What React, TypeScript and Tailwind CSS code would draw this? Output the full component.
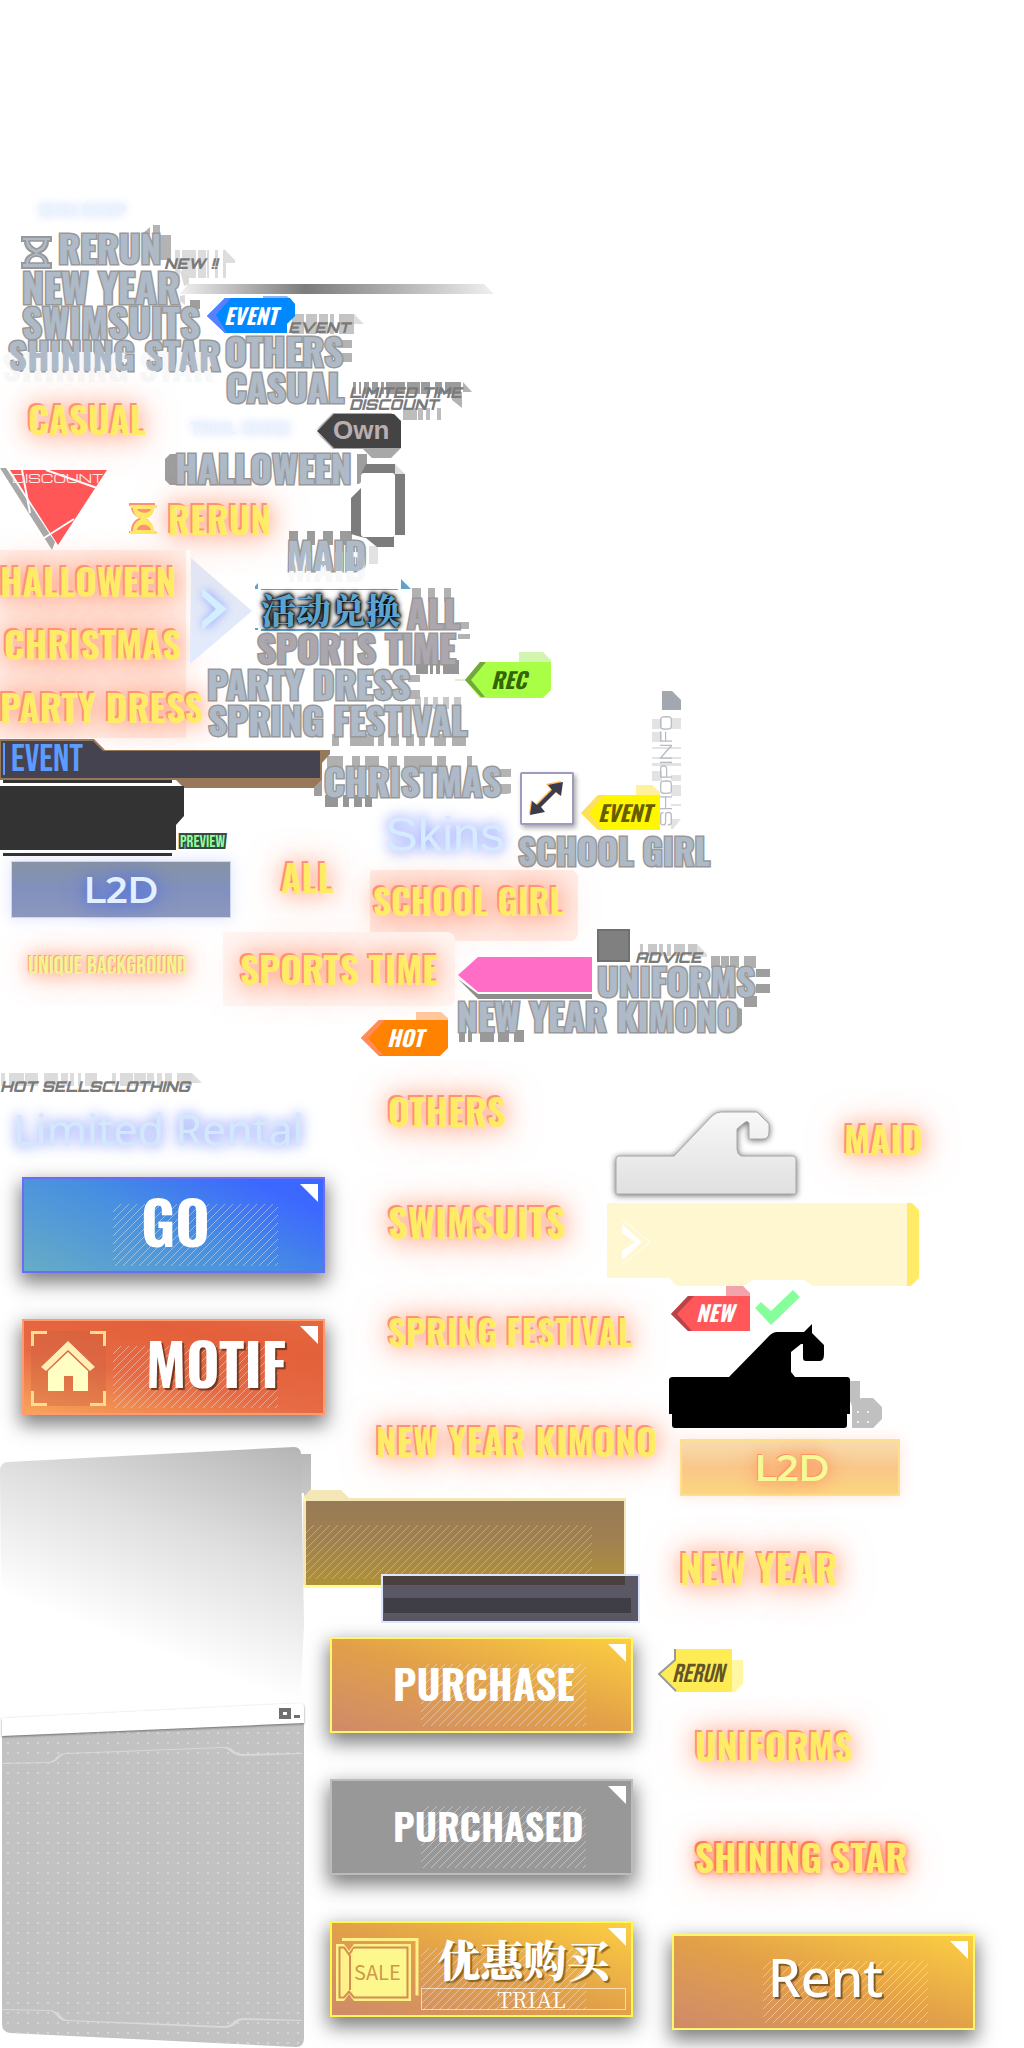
import React, { ReactNode, useId } from 'react';

type Box = { className?: string; children?: ReactNode };

const idleSize = { s: 'text-[35px]', m: 'text-[37px]', l: 'text-[39px]' };
const idleTone = { slate: 'text-[#aebac7]', mauve: 'text-[#aca6ae]' };
const litTone = {
  warm: '[text-shadow:-2px_-2px_0_#ff917c,0_0_20px_rgba(255,120,75,0.65),0_2px_36px_rgba(255,130,80,0.55)]',
  hot: '[text-shadow:-2px_-2px_0_#ff7a5c,0_0_5px_#ff7450,0_0_18px_rgba(255,110,70,0.75),0_4px_34px_rgba(255,130,80,0.5)]',
};

/* Unselected category label: slate letters with a grey outline. */
function Idle({ className = '', size = 'm', tone = 'slate', children }: Box & { size?: keyof typeof idleSize; tone?: keyof typeof idleTone }) {
  return (
    <span
      className={`block h-9 shrink-0 whitespace-nowrap leading-9 font-bold font-[Oswald,'Roboto_Condensed',sans-serif] [-webkit-text-stroke:3px_#989898] [paint-order:stroke_fill] ${idleSize[size]} ${idleTone[tone]} ${className}`}
    >
      {children}
    </span>
  );
}

/* Selected category label: yellow letters over a warm glow. */
function Lit({ className = '', size = 'm', tone = 'warm', children }: Box & { size?: keyof typeof idleSize; tone?: keyof typeof litTone }) {
  return (
    <span
      className={`block h-9 shrink-0 whitespace-nowrap pt-0.5 leading-9 text-[#ffec66] font-bold font-[Oswald,'Roboto_Condensed',sans-serif] ${idleSize[size]} ${litTone[tone]} ${className}`}
    >
      {children}
    </span>
  );
}

function Tech({ className = '', children }: Box) {
  return (
    <span className={`block shrink-0 whitespace-nowrap italic text-[15px] font-black text-[#7a7a7a] font-[Orbitron,'DejaVu_Sans',sans-serif] ${className}`}>
      {children}
    </span>
  );
}

function Faint({ className = '', children }: Box) {
  return (
    <span
      className={`block shrink-0 text-[16px] leading-4 font-bold text-[#e9f5fc] font-['Liberation_Sans',Arial,sans-serif] [text-shadow:0_0_10px_#d5dbff,0_0_16px_#e5e9ff] ${className}`}
    >
      {children}
    </span>
  );
}

function Art({ className = '', box, children }: Box & { box: string }) {
  return (
    <svg aria-hidden="true" viewBox={box} className={`block shrink-0 overflow-visible ${className}`}>
      {children}
    </svg>
  );
}

/* Arrow-shaped ribbon: the drawing fills the box, the word sits on it. */
function Ribbon({ className, box, art, children }: Box & { box: string; art: ReactNode }) {
  return (
    <div className={`relative shrink-0 whitespace-nowrap italic font-bold font-[Oswald,'Roboto_Condensed',sans-serif] ${className}`}>
      <svg aria-hidden="true" viewBox={box} className="absolute inset-0 size-full overflow-visible">
        {art}
      </svg>
      <span className="relative">{children}</span>
    </div>
  );
}

function Hatch({ className, color = '#ffffff', opacity = 0.4 }: { className: string; color?: string; opacity?: number }) {
  const id = useId();
  return (
    <svg aria-hidden="true" className={`absolute ${className}`}>
      <defs>
        <pattern id={id} width="8" height="8" patternUnits="userSpaceOnUse">
          <path d="M-1 9 9 -1M-1 1 1 -1M7 9 9 7" stroke={color} strokeOpacity={opacity} strokeWidth="1" />
        </pattern>
      </defs>
      <rect width="100%" height="100%" fill={`url(#${id})`} />
    </svg>
  );
}

function ShopButton({ className, label, children }: Box & { label: string }) {
  return (
    <button
      type="button"
      aria-label={label}
      className={`relative flex h-24 w-[303px] shrink-0 items-start border-2 text-white shadow-[0_8px_18px_2px_rgba(0,0,0,0.5)] ${className}`}
    >
      <Hatch className="left-[89px] top-[25px] h-[62px] w-[165px]" />
      <svg aria-hidden="true" viewBox="0 0 18 18" className="absolute right-[5px] top-[5px] size-[18px]">
        <path d="M0 0h18v18z" fill="#fff" />
      </svg>
      {children}
    </button>
  );
}

const smears: { y: number; h: number; fill: string; at: number[][] }[] = [
  { y: 250, h: 28, fill: '#dcdcdc', at: [[175, 5], [182, 14], [198, 8], [207, 2], [215, 3], [223, 3]] },
  { y: 314, h: 20, fill: '#c4c4c4', at: [[292, 12], [306, 11], [319, 9], [330, 4], [339, 15]] },
  { y: 382, h: 12, fill: '#9b9b9b', at: [[353, 3], [359, 2], [364, 5], [372, 6], [381, 3], [386, 19], [407, 13], [421, 9], [435, 7], [445, 16]] },
  { y: 408, h: 12, fill: '#bdbdbd', at: [[403, 14], [418, 5], [426, 4], [437, 4]] },
  { y: 531, h: 14, fill: '#9c9c9c', at: [[289, 9], [307, 8], [323, 10], [340, 12]] },
  { y: 588, h: 14, fill: '#b1b1b1', at: [[412, 9], [428, 7], [444, 7]] },
  { y: 660, h: 14, fill: '#969696', at: [[416, 12], [430, 3], [436, 4], [443, 16]] },
  { y: 697, h: 12, fill: '#c9c9c9', at: [[415, 6], [424, 4], [433, 5], [443, 6], [454, 7]] },
  { y: 734, h: 12, fill: '#b0b0b0', at: [[332, 7], [350, 24], [378, 6], [391, 8], [406, 8], [419, 6], [434, 12], [452, 14]] },
  { y: 756, h: 14, fill: '#b0b0b0', at: [[327, 16], [352, 8], [365, 14], [388, 9], [404, 28], [437, 9], [467, 5]] },
  { y: 795, h: 12, fill: '#969696', at: [[325, 13], [343, 6], [354, 8], [365, 7]] },
  { y: 944, h: 12, fill: '#c8c8c8', at: [[640, 3], [648, 9], [659, 4], [667, 4], [674, 11], [688, 9]] },
  { y: 956, h: 12, fill: '#b0b0b0', at: [[711, 9], [721, 8], [730, 9], [744, 12]] },
  { y: 1030, h: 12, fill: '#999', at: [[459, 6], [468, 4], [480, 14], [498, 11], [514, 10]] },
  { y: 1073, h: 13, fill: '#dcdcdc', at: [[1, 4], [9, 15], [25, 13], [44, 14], [61, 7], [70, 4], [78, 3], [85, 12], [112, 4], [120, 13], [134, 12], [147, 7], [157, 5], [165, 7], [177, 15]] },
];

/* Pixel smears that trail off the packed labels. */
function Smears() {
  return (
    <svg aria-hidden="true" viewBox="0 0 780 1090" className="absolute left-0 top-0 -z-10 h-[1090px] w-[780px]">
      {smears.map((row) => row.at.map(([x, w]) => <rect key={`${row.y}-${x}`} x={x} y={row.y} width={w} height={row.h} fill={row.fill} />))}
      <path d="M225 250l10 10v3h-10zM354 314l10 10h-10zM697 944l10 10v3h-10zM192 1073l10 10h-10z" fill="#dedede" />
      <path d="M142 234l8-7v8zM153 225h7v10h11v25h-18zM338 340h14v8h-14zM338 353h14v9h-14zM463 382l9 10h-9zM452 392h10v16l-10-8zM455 622h14v7h-14zM458 634h12v5h-12zM408 675h12v7h-12zM408 690h12v9h-12zM499 769h12v8h-12zM499 784h12v9l-4 1h-8zM499 744" fill="#b3b3b3" />
      <path d="M180 270l9 7v7l-5 2zM180 296l5-1v10l-5-4z" fill="#dadada" />
      <path d="M190 300h10v9h-10zM165 459l5-5h6v31h-6l-5-5zM357 454h10v22l-8 8h-2zM314 788l8-8v16h-8zM756 969h14v8h-14zM756 984h14v9h-14zM744 996h13v11h-13zM730 1004l12 5v16l-5 5h-7z" fill="#9e9e9e" />
      <path d="M369 546h9v18h-9z" fill="#e2e2e2" />
    </svg>
  );
}

function LabelRows() {
  return (
    <>
      <div className="flex h-8 pt-[5px] pl-[38px]">
        <Faint>SKIN SHOP</Faint>
      </div>
      <div className="flex h-[38px] items-start pl-[20px]">
        <Art className="mt-[5px] h-[34px] w-[32px]" box="20 235 32 34">
          <path d="M22 237h29v4h-3c0 8-5 10-9 12 4 2 9 4 9 10h3v5H22v-5h3c0-6 5-8 9-10-4-2-9-4-9-12h-3z" fill="#aebac7" stroke="#989898" strokeWidth="2" />
          <path d="M29 241h15c-1 5-4 7-7.500 8-3.500-1-6.500-3-7.500-8zM29 263c1-5 4-7 7.500-7s6.500 2 7.500 7z" fill="#fff" stroke="#989898" strokeWidth="1.500" />
        </Art>
        <Idle className="ml-[6px] w-[106px]">RERUN</Idle>
        <Tech className="mt-[26px] leading-4">NEW !!</Tech>
      </div>
      <div className="flex h-[35px] items-start pl-[22px]">
        <Idle size="l" className="w-[158px]">NEW YEAR</Idle>
        <div className="mt-4 h-[10px] w-[314px] bg-linear-to-r from-[#f0f0f0] via-[#7c7c7c] via-40% to-[#f0f0f0] [clip-path:polygon(8px_0,304px_0,100%_100%,0_100%)]" />
      </div>
      <div className="flex h-[34px] items-start pl-[22px]">
        <Idle size="l" className="w-[185px]">SWIMSUITS</Idle>
        <Ribbon
          className="-mt-[7px] h-[38px] w-[81px] pl-[17px] pt-[7px] text-[22px] leading-6 text-white"
          box="207 296 81 38"
          art={
            <>
              <path d="M263 296h24l3 3h-27z" fill="#8fb4f5" />
              <path d="M207 316l18-18h65l5 6v12l-8 8v9h-62z" fill="#0088ff" />
              <path d="M207 316l18-18h6l-15 17 11 18h-2z" fill="#5580ff" />
            </>
          }
        >
          EVENT
        </Ribbon>
        <Tech className="mt-[17px] leading-4">EVENT</Tech>
      </div>
      <div className="flex h-8 items-start pl-2">
        <Idle className="w-[217px] [text-shadow:-6px_11px_0_#f7f8f9]">SHINING STAR</Idle>
        <Idle className="-mt-1">OTHERS</Idle>
      </div>
      <div className="flex h-[30px] items-start pl-[226px]">
        <Idle className="w-[123px]">CASUAL</Idle>
        <Tech className="mt-[18px] text-[15px] leading-3">
          LIMITED TIME
          <br />
          DISCOUNT
        </Tech>
      </div>
      <div className="flex h-[69px] items-start pl-7">
        <Lit className="w-[162px]">CASUAL</Lit>
        <Faint className="mt-[22px] w-[125px]">TRIAL SKINS</Faint>
        <div className="relative mt-[13px] h-[46px] w-[87px] shrink-0 pt-1 pl-[18px] text-[26px] leading-7 font-bold text-[#baafb0] font-['Liberation_Sans',Arial,sans-serif]">
          <svg aria-hidden="true" viewBox="315 412 87 46" className="absolute inset-0 size-full overflow-visible">
            <path d="M315 431l18-18h58l5 3H335zM315 431l18 18h30l9 9h19l10-10H336z" fill="#a8a8a8" />
            <path d="M317 431l17-17h60l7 7v27h-67z" fill="#444" />
          </svg>
          <span className="relative">Own</span>
        </div>
      </div>
    </>
  );
}

function DiscountRow() {
  return (
    <div className="flex h-[82px] items-start">
      <div className="relative h-[82px] w-[108px] shrink-0 pt-0.5 pl-3">
        <svg aria-hidden="true" viewBox="0 468 108 82" className="absolute inset-0 size-full">
          <path d="M0 468h6l49 74-3 8z" fill="#a8a8a8" />
          <path d="M10 470h97l-49 75z" fill="#ff5757" />
          <path d="M22 470l8 43M46 470l51 18M44 538l30-19" stroke="#fff" strokeWidth="2" />
        </svg>
        <span className="relative block text-[12px] leading-4 text-[#ffe9e9] font-[Michroma,'DejaVu_Sans',sans-serif]">DISCOUNT</span>
      </div>
      <div className="ml-[21px] w-[222px] shrink-0">
        <Idle className="-mt-[18px] ml-[46px]">HALLOWEEN</Idle>
        <div className="mt-[13px] flex">
          <Art className="mt-1 h-8 w-7" box="129 503 28 32">
            <g fillRule="evenodd">
              <path d="M129 503h26v3h-2c0 8-5 10-8 12 3 2 8 4 8 13h2v2h-26v-2h2c0-9 5-11 8-13-3-2-8-4-8-12h-2z" fill="#ff917c" />
              <path d="M130 505h27v3h-3c0 7-5 9-8 11 3 2 8 4 8 12h3v3h-27v-3h3c0-8 5-10 8-12-3-2-8-4-8-11h-3zM137 509c2 5 13 5 14 0zM137 530c1-7 12-7 14 0z" fill="#ffec66" />
            </g>
          </Art>
          <Lit className="ml-[11px]">RERUN</Lit>
        </div>
      </div>
      <Art className="-mt-[6px] h-[86px] w-[54px]" box="351 462 54 86">
        <path d="M366 464h29v10h10v61h-11v12h-17l-11-9-5-1-10-3v-36l10-10v-14z" fill="#7c7c7c" />
        <path d="M395 464l10 10h-10z" fill="#dedede" />
        <rect x="361" y="473" width="34" height="64" rx="3" fill="#fff" />
      </Art>
    </div>
  );
}

function FestivalRow() {
  return (
    <div className="flex h-[188px] items-start">
      <div className="flex h-full w-[190px] shrink-0 flex-col gap-[27px] bg-linear-to-r from-[#fff0ea] from-98% to-white to-98% pt-[11px]">
        <Lit>HALLOWEEN</Lit>
        <Lit className="ml-1">CHRISTMAS</Lit>
        <Lit>PARTY DRESS</Lit>
      </div>
      <div className="flex flex-col">
        <div className="flex h-[116px] items-start">
          <Art className="mt-2 h-[106px] w-[62px]" box="190 558 62 106">
            <defs>
              <linearGradient id="fin" x1="0" y1="0" x2="0" y2="1">
                <stop offset="0" stopColor="#e2e5f0" />
                <stop offset="1" stopColor="#e2ecff" />
              </linearGradient>
              <filter id="halo" x="-80%" y="-50%" width="260%" height="200%">
                <feGaussianBlur stdDeviation="5" />
              </filter>
            </defs>
            <path d="M191 558l61 53-62 53z" fill="url(#fin)" />
            <path d="M204 592l17 17-17 17" fill="none" stroke="#8fa5ff" strokeWidth="9" filter="url(#halo)" opacity="0.800" />
            <path d="M202 588l25 21-25 21v-8l14-13-14-13z" fill="#d2eeff" />
          </Art>
          <div className="ml-[3px] flex flex-col">
            <Idle className="-mt-[13px] ml-8 [text-shadow:0_11px_0_#f7f8f9]">MAID</Idle>
            <div className="mt-[6px] flex h-[51px] items-start">
              <div className="relative h-[52px] w-[152px] shrink-0 pt-3 pl-[6px]">
                <svg aria-hidden="true" viewBox="255 579 152 52" className="absolute inset-0 size-full overflow-visible">
                  <path d="M401 579l10 10h-10zM255 586l3-3v6h-3zM261 589h137v1H261zM261 629h137v2H261zM255 628h3v2h-3z" fill="#5ca3cf" />
                </svg>
                <span className="relative block whitespace-nowrap text-[35px] leading-9 font-black text-[#5ca3cf] font-['Noto_Serif_CJK_SC','Noto_Sans_CJK_SC',serif] [text-shadow:0_0_2px_#000,0_0_3px_#000,0_0_5px_#000,0_0_6px_#000]">
                  活动兑换
                </span>
              </div>
              <Idle tone="mauve" className="mt-4">ALL</Idle>
            </div>
            <Idle tone="mauve" className="ml-0.5">SPORTS TIME</Idle>
          </div>
        </div>
        <div className="ml-[17px] flex h-9 items-start">
          <Idle className="w-[258px]">PARTY DRESS</Idle>
          <Ribbon
            className="-mt-[14px] h-[46px] w-[87px] pt-[15px] pl-[26px] text-[22px] leading-6 text-[#336600]"
            box="465 652 87 46"
            art={
              <>
                <path d="M519 652h24l8 8v3h-32z" fill="#d4f5b0" />
                <path d="M455 680h12" stroke="#c5dfb0" />
                <path d="M465 680l15-18h71v28l-8 8h-63z" fill="#a9ff46" />
                <path d="M465 680l15-18h6l-15 18 14 17h-4z" fill="#72a83c" />
              </>
            }
          >
            REC
          </Ribbon>
        </div>
        <Idle className="ml-[18px]">SPRING FESTIVAL</Idle>
      </div>
    </div>
  );
}

function PanelRow() {
  return (
    <div className="flex h-[119px] items-start">
      <div className="w-[324px] shrink-0">
        <div className="relative h-[50px] pt-[6px] pl-[11px]">
          <svg aria-hidden="true" viewBox="0 738 330 50" className="absolute top-0 left-0 h-[50px] w-[330px]">
            <path d="M0 739h94l11 11h225v4l-8 9v17l-8 8H184l-8-8H0z" fill="#97785a" />
            <path d="M1 741h92l10 10h217v27H1z" fill="#45434f" />
            <path d="M3 743h2v32H3z" fill="#5c9bff" />
          </svg>
          <span className="relative block text-[38px] leading-8 text-[#5c9bff] font-['Bebas_Neue',Oswald,sans-serif]">EVENT</span>
        </div>
        <div className="-mt-2 flex items-start">
          <Art className="relative h-[77px] w-[184px]" box="0 780 184 77">
            <path d="M3 780h169v3H3zM0 786h184v30l-8 9v25H0zM3 853h169v3H3z" fill="#333" />
          </Art>
          <span className="-ml-1 mt-[54px] text-[17px] leading-4 text-[#8dff9c] font-['Bebas_Neue',Oswald,sans-serif] [-webkit-text-stroke:4px_#3a4a40] [paint-order:stroke_fill]">
            PREVIEW
          </span>
        </div>
      </div>
      <div>
        <div className="flex h-[69px] items-start">
          <Idle className="mt-[25px] w-[196px]">CHRISTMAS</Idle>
          <div className="mt-[34px] h-[53px] w-[54px] shrink-0 rounded-xs border-2 border-[#9d9bc0] bg-white shadow-[2px_3px_5px_rgba(0,0,0,0.35)]">
            <svg aria-hidden="true" viewBox="522 774 50 49" className="size-full">
              <path d="M529 814l2-14 5 4 15-15-5-5 15-3-2 14-5-4-15 15 5 5z" fill="#ffb454" />
              <path d="M530 815l2-14 5 4 15-15-4-5 15-3-2 14-5-4-15 15 4 5z" fill="#3c3a4d" />
            </svg>
          </div>
          <Ribbon
            className="mt-[47px] ml-[7px] h-[46px] w-[80px] pt-[15px] pl-[17px] text-[22px] leading-6 text-[#665c00]"
            box="581 785 80 46"
            art={
              <>
                <path d="M636 785h16l8 7v4h-24z" fill="#fff29a" />
                <path d="M581 813l17-18h62v35h-62z" fill="#fff600" />
                <path d="M581 813l17-18h6l-15 18 14 17h-5z" fill="#ffdf60" />
              </>
            }
          >
            EVENT
          </Ribbon>
          <div className="relative -mt-[47px] -ml-[9px] h-[140px] w-[29px] shrink-0 pt-[24px] pl-[6px]">
            <svg aria-hidden="true" viewBox="652 691 29 140" className="absolute inset-0 size-full">
              <path d="M662 691h10l9 9v10h-19z" fill="#a2a7b0" />
              <path
                d="M652 719h10v10h-10zM671 718h10v11h-10zM652 732h10v10h-10zM652 747h29v2h-29zM652 757h29v2h-29zM652 763h29v3h-29zM652 771h10v10h-10zM671 775h10v6h-10zM671 785h10v11h-10zM671 804h10v2h-10zM671 819h10l-8 10h-2z"
                fill="#e2e3e5"
              />
            </svg>
            <span className="relative block rotate-180 text-[15px] leading-4 text-[#b9bcc3] font-[Michroma,'DejaVu_Sans',sans-serif] [writing-mode:vertical-rl]">SHOPINFO</span>
          </div>
        </div>
        <div className="flex items-start pl-[61px]">
          <span className="w-[133px] text-[49px] leading-[54px] text-[#d6ebff] font-['Liberation_Sans',Arial,sans-serif] [text-shadow:0_0_12px_#8fa0ff,0_0_18px_#a5b4ff]">Skins</span>
          <Idle size="s" className="mt-[25px]">SCHOOL GIRL</Idle>
        </div>
      </div>
    </div>
  );
}

function GlowRows() {
  return (
    <>
      <div className="flex h-[75px] items-start pl-[11px]">
        <div className="mt-1 flex h-[57px] w-[220px] shrink-0 items-center justify-center border border-[#cbd8ee] bg-linear-to-b from-[#8893a4] via-[#8190bd] to-[#8d97bd] text-[37px] leading-10 font-semibold text-[#e2f0ff] shadow-[0_0_14px_rgba(120,140,255,0.25)] font-[Montserrat,'Liberation_Sans',sans-serif] [text-shadow:0_0_14px_#4f70e0,0_0_22px_#5f7ce0]">
          L2D
        </div>
        <Lit className="ml-[50px] w-[89px]">ALL</Lit>
        <div className="mt-[13px] h-[71px] w-[208px] shrink-0 rounded-r-lg bg-[#ffede7] pt-[10px] pl-[3px]">
          <Lit size="s">SCHOOL GIRL</Lit>
        </div>
      </div>
      <div className="flex h-[74px] items-start pl-7">
        <span className="mt-[25px] w-[195px] shrink-0 whitespace-nowrap text-[25px] leading-5 text-[#f3f58e] font-['Bebas_Neue',Oswald,sans-serif] [text-shadow:-1px_-1px_0_#ffa07f,0_0_16px_rgba(255,125,80,0.75),0_2px_30px_rgba(255,125,80,0.6)]">
          UNIQUE BACKGROUND
        </span>
        <div className="h-[74px] w-[232px] shrink-0 rounded-r-lg bg-[#fff6f3] pt-[17px] pl-[17px]">
          <Lit>SPORTS TIME</Lit>
        </div>
        <Art className="mt-[25px] ml-[3px] h-[42px] w-[134px]" box="458 957 134 42">
          <path d="M458 979l20 15h114v5H478z" fill="#8e8e8e" />
          <path d="M458 975l20-18h114v35H478z" fill="#ff6dc7" />
        </Art>
        <div className="-mt-[3px] ml-[5px]">
          <div className="flex items-start gap-[5px]">
            <div className="size-[33px] border-2 border-[#707070] bg-[#808080]" />
            <Tech className="mt-[21px] h-3 leading-4">ADVICE</Tech>
          </div>
          <Idle className="mt-px">UNIFORMS</Idle>
        </div>
      </div>
      <div className="flex h-[57px] items-start gap-2 pl-[361px]">
        <Ribbon
          className="mt-[6px] h-[44px] w-[88px] pt-[13px] pl-[26px] text-[22px] leading-6 text-white"
          box="361 1012 88 44"
          art={
            <>
              <path d="M416 1012h25l7 6v3h-32z" fill="#ffc79b" />
              <path d="M361 1038l18-18h69v28l-8 8h-61z" fill="#ff8300" />
              <path d="M361 1038l18-18h6l-17 18 15 17h-4z" fill="#ff8c5a" />
            </>
          }
        >
          HOT
        </Ribbon>
        <Idle className="-mt-2">NEW YEAR KIMONO</Idle>
      </div>
    </>
  );
}

function CardBack() {
  return (
    <Art className="mt-[31px] h-[602px] w-[312px]" box="0 1446 312 602">
      <defs>
        <linearGradient id="sheen" gradientUnits="userSpaceOnUse" x1="300" y1="1447" x2="216" y2="1673">
          <stop offset="0" stopColor="#b5b5b5" />
          <stop offset="0.500" stopColor="#dfdfdf" />
          <stop offset="1" stopColor="#ffffff" />
        </linearGradient>
        <linearGradient id="edge" x1="0" y1="0" x2="0" y2="1">
          <stop offset="0" stopColor="#b8b8b8" />
          <stop offset="1" stopColor="#c8c8c8" />
        </linearGradient>
        <pattern id="dots" width="10" height="10" x="7" y="1732" patternUnits="userSpaceOnUse">
          <rect width="2" height="2" fill="#d6d6d6" />
        </pattern>
      </defs>
      <path d="M300 1454h11v39l-7 3v-3h-4z" fill="url(#edge)" />
      <path d="M0 1470q1-8 8-8l286-15q7 0 7 8l3 170-4 78L2 1718z" fill="url(#sheen)" />
      <path d="M2 1735l302-13v316q0 9-8 9L10 2033q-8-1-8-9z" fill="#c2c2c2" />
      <path d="M2 1735l302-13v316q0 9-8 9L10 2033q-8-1-8-9z" fill="url(#dots)" />
      <path
        d="M2 1763l46-1q4 0 7-3 4-6 12-6l158-6q6 0 9 4 4 3 9 3l59-1v1l-59 2q-7 0-12-4-4-4-8-4l-156 6q-5 0-9 5-4 4-9 4l-47 1zM2 2009l46 1q7 0 12 5 4 5 8 5l156 6q6 0 10-5 4-3 9-3l59 2v1l-58-1q-5 0-8 4-5 4-12 4l-158-7q-6 0-9-5-4-5-9-5l-46-1z"
        fill="#d8d8d8"
      />
      <path d="M2 1718l298-15q4 0 4 4v16L2 1736z" fill="#fff" className="drop-shadow-[0_1px_1px_rgba(0,0,0,0.45)]" />
      <path fillRule="evenodd" d="M279 1708h12v11h-12zM283 1712h4v3h-4zM294 1715h6v3h-6z" fill="#6f6f6f" />
    </Art>
  );
}

const word = "relative font-bold whitespace-nowrap font-[Oswald,'Roboto_Condensed',sans-serif]";

function LeftColumn() {
  return (
    <div className="flex w-[303px] shrink-0 flex-col items-start">
      <Tech className="mt-4 leading-4">HOT SELLSCLOTHING</Tech>
      <span className="mt-2 ml-[13px] whitespace-nowrap text-[43px] leading-[54px] text-[#d4e8fc] font-['Noto_Sans',sans-serif] [text-shadow:0_0_12px_#8fa0ff,0_0_18px_#b5c1ff]">
        Limited Rental
      </span>
      <ShopButton label="Go" className="mt-5 ml-[22px] border-[#6a6cf5] bg-[linear-gradient(25deg,#67acc6_0%,#468ee2_50%,#3d68ff_85%)] pl-[117px]">
        <span className={`${word} mt-[14px] text-[59px] leading-[56px]`}>GO</span>
      </ShopButton>
      <ShopButton label="Motif" className="mt-[46px] ml-[22px] border-[#ff9b70] bg-[linear-gradient(12deg,#f9a45a_0%,#e66b45_40%,#e3603a_75%,#e46841_100%)] pl-[7px]">
        <svg aria-hidden="true" viewBox="31 1331 75 75" className="relative mt-[10px] size-[75px] shrink-0">
          <rect x="31" y="1331" width="75" height="75" fill="#c8623f" opacity="0.350" />
          <path d="M32.500 1346v-13.500H47M90 1332.500h14.500V1346M32.500 1391v13.500H47M90 1404.500h14.500V1391" fill="none" stroke="#ffdc90" strokeWidth="3" />
          <path d="M68 1341l27 26-5 4-22-21-22 21-5-4z" fill="#ffefb5" />
          <path d="M68 1352l20 19v20H73v-15h-9v15H48v-20z" fill="#ffffc4" />
        </svg>
        <span className={`${word} mt-[13px] ml-[40px] text-[57px] leading-[56px] [text-shadow:2px_2px_1px_rgba(90,40,20,0.8)]`}>MOTIF</span>
      </ShopButton>
      <CardBack />
    </div>
  );
}

function MiddleColumn() {
  return (
    <div className="flex w-[304px] shrink-0 flex-col items-start">
      <div className="flex flex-col gap-[74px] pt-7 pl-[85px]">
        <Lit>OTHERS</Lit>
        <Lit size="l">SWIMSUITS</Lit>
        <Lit size="s">SPRING FESTIVAL</Lit>
        <Lit className="-ml-3">NEW YEAR KIMONO</Lit>
      </div>
      <div className="relative mt-[33px] h-[98px] w-[323px] shrink-0">
        <svg aria-hidden="true" viewBox="303 1490 323 98" className="absolute inset-0 size-full">
          <defs>
            <linearGradient id="bronze" x1="0" y1="0" x2="0" y2="1">
              <stop offset="0" stopColor="#977b55" />
              <stop offset="0.450" stopColor="#a08051" />
              <stop offset="1" stopColor="#af9138" />
            </linearGradient>
          </defs>
          <path d="M303 1498l7-8h31l8 8h277v90H303z" fill="#f5e6b8" />
          <path d="M303 1585h323v3H303zM303 1498h3v4h-3z" fill="#fffd93" />
          <path d="M306 1501h318v84H306z" fill="url(#bronze)" />
        </svg>
        <Hatch className="left-[3px] top-[35px] h-[54px] w-[286px]" color="#f0dfa0" opacity={0.45} />
      </div>
      <div className="relative -mt-[14px] ml-[78px] h-[49px] w-[259px] shrink-0 border-2 border-[#dde5ff] bg-[#5b5865]">
        <div className="h-[9px] w-[242px] bg-[#4a403d]" />
        <div className="mt-[13px] ml-px h-[15px] w-[247px] bg-[#3f3d45]" />
      </div>
      <div className="mt-[14px] ml-[27px] flex flex-col gap-[46px]">
        <ShopButton label="Purchase" className="border-[#fff76a] bg-linear-to-tr from-[#cf8a68] via-[#e2a048] to-[#fccf40] pl-[61px]">
          <span className={`${word} mt-6 text-[41px] leading-10`}>PURCHASE</span>
        </ShopButton>
        <ShopButton label="Purchased" className="border-[#bcbcbc] bg-[#989898] pl-[61px]">
          <span className={`${word} mt-6 text-[38px] leading-10`}>PURCHASED</span>
        </ShopButton>
        <ShopButton label="优惠购买 trial sale" className="border-[#fff94e] bg-linear-to-tr from-[#cf8a68] via-[#e2a048] to-[#fccf40]">
          <span className="relative mt-[11px] flex h-[72px] w-[89px] shrink-0 items-center pt-1 pl-[22px] text-[20px] leading-6 text-[#cf9a48] font-['Noto_Sans_CJK_SC','Noto_Sans',sans-serif]">
            <svg aria-hidden="true" viewBox="332 1934 89 72" className="absolute inset-0 size-full">
              <path d="M342 1939.500h75v56" fill="none" stroke="#fff08a" strokeWidth="3" />
              <path d="M336 1944h8l5 7 5-7h57v57h-57l-5-7-5 7h-8z" fill="#fff08a" />
              <path d="M341 1947.500h3l5 7 5-7h53.500v50H354l-5-6-5 6h-4.500v-50z" fill="none" stroke="#d08f52" strokeWidth="2" />
              <path d="M350 1955v35" stroke="#d08f52" strokeWidth="2" />
              <path d="M353 1949h53v46h-53z" fill="#fdf88e" />
            </svg>
            <span className="relative">SALE</span>
          </span>
          <span className="relative flex flex-col items-center pt-[10px]">
            <span className="whitespace-nowrap text-[43px] leading-[52px] font-black font-['Noto_Serif_CJK_SC','Noto_Sans_CJK_SC',serif] [text-shadow:2px_2px_1px_rgba(110,80,20,0.75)]">优惠购买</span>
            <span className="mt-[3px] flex h-[22px] w-[205px] items-center justify-center border border-white/60 pl-4 text-[22px] leading-5 font-['Noto_Serif_CJK_SC',serif]">TRIAL</span>
          </span>
        </ShopButton>
      </div>
    </div>
  );
}

function RightColumn() {
  return (
    <div className="flex min-w-0 flex-1 flex-col items-start">
      <div className="flex h-[135px] items-start pt-[45px] pl-[5px]">
        <Art className="h-[90px] w-[190px]" box="612 1108 190 90">
          <defs>
            <linearGradient id="steel" x1="0" y1="0" x2="0" y2="1">
              <stop offset="0" stopColor="#f8f8f8" />
              <stop offset="1" stopColor="#e0e0e0" />
            </linearGradient>
          </defs>
          <path
            d="M619 1156h55l38-40q4-4 9-4h36l12 12v8q0 7-6 7h-14v-16q-2-3-5 0l-7 6v20q0 5 4 7h52q3 0 3 3v35H616v-35q0-3 3-3z"
            fill="url(#steel)"
            stroke="#a8a8a8"
            className="drop-shadow-[0_1px_3px_rgba(0,0,0,0.6)]"
          />
        </Art>
        <Lit className="mt-[11px] ml-[42px]">MAID</Lit>
      </div>
      <Art className="mt-[5px] h-[83px] w-[312px]" box="607 1203 312 83">
        <path d="M607 1203h300v83h-94l-9-6h-52l-8 6h-67l-8-8h-62z" fill="#fff7cf" />
        <path d="M907 1203h5l7 7v68l-8 8h-4z" fill="#ffeb66" />
        <path d="M622 1224l20 18-20 18v-9l13-9-13-9z" fill="#fff" />
        <path d="M622 1219l28 23-28 23" fill="none" stroke="#fff" />
      </Art>
      <div className="flex h-[38px] items-start gap-1 pl-16">
        <Ribbon
          className="h-[46px] w-[80px] pt-[14px] pl-[25px] text-[22px] leading-6 text-white"
          box="671 1286 80 46"
          art={
            <>
              <path d="M726 1286h17l7 7v4h-24z" fill="#f3a3aa" />
              <path d="M671 1314l17-18h62v35h-62z" fill="#ff575a" />
              <path d="M671 1314l17-18h6l-17 18 15 17h-4z" fill="#b84348" />
            </>
          }
        >
          NEW
        </Ribbon>
        <Art className="mt-1 h-9 w-[46px]" box="755 1290 46 36">
          <path d="M755 1308l6-6 10 9 22-21 7 7-29 28z" fill="#85ff99" />
        </Art>
      </div>
      <Art className="ml-[62px] h-[105px] w-[214px]" box="669 1324 214 105">
        <path d="M850 1381h10v18l1-1h12l9 9v12l-9 9h-21v-22l-2-5z" fill="#c0c0c0" />
        <path d="M857 1411h2v2h-2zM867 1411h2v2h-2zM857 1421h2v2h-2zM867 1421h2v2h-2z" fill="#eee" />
        <path
          d="M673 1377h56l40-41q4-4 8-4h27l8-8v9l12 12v9q0 7-4 7h-14q-3 0-3-3v-14h-2l-10 8v20l4 5h52q3 0 3 3v34h-3v11q0 3-3 3H675q-3 0-3-3v-11h-3v-34q0-3 4-3z"
          fill="#000"
        />
      </Art>
      <div className="flex flex-col items-start pt-[10px] pl-[73px]">
        <div className="flex h-[57px] w-[220px] items-center justify-center border-2 border-[#fde08c] bg-linear-to-b from-[#f8dcae] via-[#f9c78a] to-[#fcd580] pl-1 text-[37px] leading-10 font-semibold text-[#f2fb96] shadow-[0_0_14px_rgba(255,150,110,0.25)] font-[Montserrat,'Liberation_Sans',sans-serif] [text-shadow:-1px_-1px_0_#ff9460,0_0_14px_#ff9060,0_0_24px_#ff9d66]">
          L2D
        </div>
        <Lit className="mt-[51px]" size="l">NEW YEAR</Lit>
      </div>
      <Ribbon
        className="mt-[66px] ml-[51px] h-[43px] w-[85px] pt-[14px] pl-[14px] text-[#635525]"
        box="658 1649 85 43"
        art={
          <>
            <path d="M732 1660h11v24l-8 8h-3z" fill="#fff7a3" />
            <path d="M659 1674l16-14v-11h57v43h-57v-4z" fill="#ffec55" />
            <path d="M675 1649v11l-16 14 17 17" fill="none" stroke="#999" strokeWidth="2" />
          </>
        }
      >
        <span className="block text-[26px] leading-6 font-normal font-['Bebas_Neue',Oswald,sans-serif]">RERUN</span>
      </Ribbon>
      <div className="flex flex-col gap-[75px] pt-[34px] pl-[88px]">
        <Lit>UNIFORMS</Lit>
        <Lit tone="hot">SHINING STAR</Lit>
      </div>
      <ShopButton label="Rent" className="mt-[61px] ml-[65px] border-[#fff76a] bg-linear-to-tr from-[#cf8a68] via-[#e2a048] to-[#fccf40] pl-[94px]">
        <span className="relative mt-[13px] text-[52px] leading-[56px] font-medium font-['Noto_Sans',sans-serif] [text-shadow:2px_2px_1px_rgba(90,60,20,0.75)]">Rent</span>
      </ShopButton>
    </div>
  );
}

export default function App() {
  return (
    <main className="relative isolate w-full overflow-hidden bg-white">
      <Smears />
      <section className="flex h-[1063px] flex-col pt-[198px]">
        <LabelRows />
        <DiscountRow />
        <FestivalRow />
        <PanelRow />
        <GlowRows />
      </section>
      <section className="flex items-start">
        <LeftColumn />
        <MiddleColumn />
        <RightColumn />
      </section>
    </main>
  );
}
